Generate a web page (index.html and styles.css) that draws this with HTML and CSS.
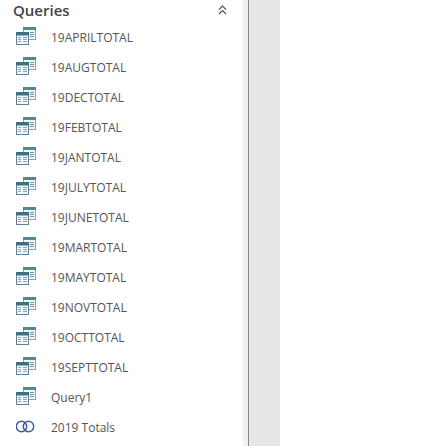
FILE: index.html
```html
<!DOCTYPE html>
<html lang="en">
<head>
<meta charset="utf-8">
<title>Queries</title>
<link rel="stylesheet" href="styles.css">
</head>
<body>
<svg class="defs" width="0" height="0" aria-hidden="true">
  <defs>
    <g id="q">
      <rect x="7.5" y="0.5" width="12" height="12" fill="#f2f7f7" stroke="#7fa8a8"/>
      <rect x="7" y="0" width="13" height="3" fill="#4f8a8c"/>
      <path d="M14 5.5h4M14 7.5h4M14 9.5h4" stroke="#6f93b8"/>
      <rect x="0.5" y="5.5" width="12" height="12" fill="#f6f9fb" stroke="#5f7f9f"/>
      <rect x="0" y="5" width="13" height="3.5" fill="#3f7080"/>
      <path d="M2 10.5h3M2 12.5h3M2 14.5h3M7 10.5h4M7 12.5h4M7 14.5h4" stroke="#86a3c2"/>
    </g>
    <g id="u" fill="none" stroke="#3a5c9c" stroke-width="1.5">
      <circle cx="6.5" cy="6" r="5.2"/>
      <circle cx="13.5" cy="6" r="5.2"/>
    </g>
  </defs>
</svg>
<div class="shell">
  <main class="pane">
    <header class="head">
      <h1 class="title">Queries</h1>
      <svg class="chev" width="9" height="10" viewBox="0 0 9 10"><path d="M1 4.5 4.5 1 8 4.5M1 9 4.5 5.5 8 9" fill="none" stroke="#555" stroke-width="1.2"/></svg>
    </header>
    <ul class="list">
      <li class="row"><svg class="ic" width="20" height="18"><use href="#q"/></svg><span>19APRILTOTAL</span></li>
      <li class="row"><svg class="ic" width="20" height="18"><use href="#q"/></svg><span>19AUGTOTAL</span></li>
      <li class="row"><svg class="ic" width="20" height="18"><use href="#q"/></svg><span>19DECTOTAL</span></li>
      <li class="row"><svg class="ic" width="20" height="18"><use href="#q"/></svg><span>19FEBTOTAL</span></li>
      <li class="row"><svg class="ic" width="20" height="18"><use href="#q"/></svg><span>19JANTOTAL</span></li>
      <li class="row"><svg class="ic" width="20" height="18"><use href="#q"/></svg><span>19JULYTOTAL</span></li>
      <li class="row"><svg class="ic" width="20" height="18"><use href="#q"/></svg><span>19JUNETOTAL</span></li>
      <li class="row"><svg class="ic" width="20" height="18"><use href="#q"/></svg><span>19MARTOTAL</span></li>
      <li class="row"><svg class="ic" width="20" height="18"><use href="#q"/></svg><span>19MAYTOTAL</span></li>
      <li class="row"><svg class="ic" width="20" height="18"><use href="#q"/></svg><span>19NOVTOTAL</span></li>
      <li class="row"><svg class="ic" width="20" height="18"><use href="#q"/></svg><span>19OCTTOTAL</span></li>
      <li class="row"><svg class="ic" width="20" height="18"><use href="#q"/></svg><span>19SEPTTOTAL</span></li>
      <li class="row"><svg class="ic" width="20" height="18"><use href="#q"/></svg><span>Query1</span></li>
      <li class="row"><svg class="ic" width="20" height="18" viewBox="1 -3.5 20 18"><use href="#u"/></svg><span>2019 Totals</span></li>
    </ul>
  </main>
  <div class="edge"></div>
  <div class="gutter"></div>
  <div class="content"></div>
</div>
</body>
</html>
```
FILE: styles.css
```css
html, body { margin: 0; height: 100%; background: #fff; }
body { font-family: "Open Sans", "Liberation Sans", sans-serif; color: #444; overflow: hidden; }
.defs { position: absolute; }
.shell { display: flex; width: 435px; height: 446px; }
.pane { width: 243px; flex: none; }
.edge { width: 6px; flex: none; box-sizing: border-box; background: #f0f0f2; border-right: 1px solid #8a8a8a; }
.gutter { width: 31px; flex: none; background: #e6e6e6; }
.content { flex: 1; background: #fff; }
.head { display: flex; justify-content: space-between; align-items: center; padding: 0 16px 0 13px; height: 20px; }
.title { margin: 0; font-size: 15px; font-weight: 600; color: #444; }
.list { list-style: none; margin: 0; padding: 2px 0 0 16px; }
.row { display: flex; align-items: center; gap: 15px; height: 30px; font-size: 12px; color: #555; }
.ic { flex: none; margin-bottom: 2px; }
```
